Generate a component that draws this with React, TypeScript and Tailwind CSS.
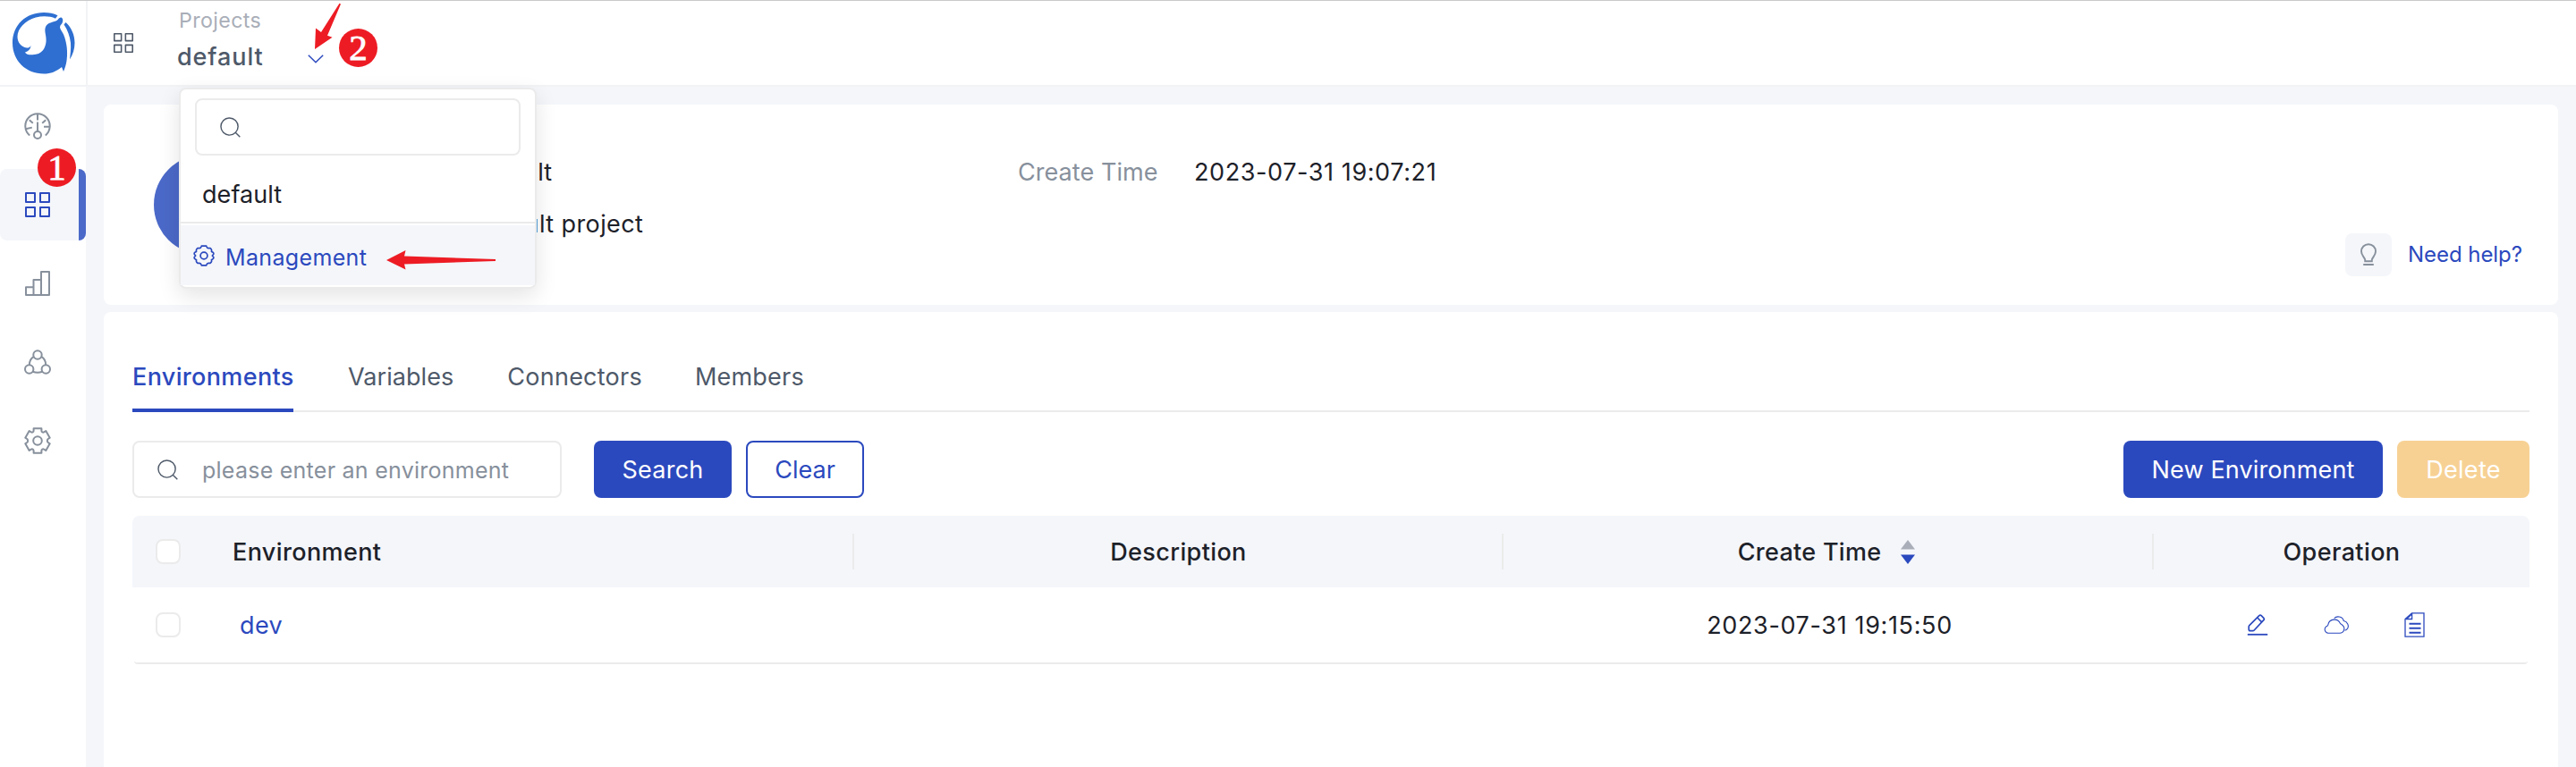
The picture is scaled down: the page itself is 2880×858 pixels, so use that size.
type IconProps = { className?: string };

const GearIcon = ({ className }: IconProps) => (
  <svg viewBox="0 0 30 30" className={className} fill="none" stroke="currentColor" strokeWidth="2" strokeLinejoin="round">
    <path d="M10.6 1.300h8.800v2.500a1.800 1.800 0 0 0 2.700 1.600l2.200-1.300 4.400 7.600-1.400.9a2.700 2.700 0 0 0 0 4.800l1.400.9-4.400 7.600-2.200-1.300a1.800 1.800 0 0 0-2.700 1.600v2.500h-8.800v-2.500a1.800 1.800 0 0 0-2.700-1.600l-2.200 1.300-4.400-7.600 1.400-.9a2.700 2.700 0 0 0 0-4.800l-1.400-.9 4.400-7.600 2.200 1.300a1.800 1.800 0 0 0 2.700-1.600z" />
    <circle cx="15" cy="15" r="4.8" />
  </svg>
);

const gearQuarter = "M12 1.200h2.600C15.200 2.900 15.800 3.800 17.200 3.700L19.100 3.600C20 4.200 20.500 4.900 20.600 5.800L20.500 7.400C21.400 8.200 22.500 8.300 22.800 9.200V10.100C22.600 11.100 21.400 11.100 21.400 12";

const SmallGearIcon = ({ className }: IconProps) => (
  <svg viewBox="0 0 24 24" className={className} fill="none" stroke="currentColor" strokeWidth="1.7">
    <path d={gearQuarter} />
    <path d={gearQuarter} transform="matrix(-1 0 0 1 24 0)" />
    <path d={gearQuarter} transform="matrix(1 0 0 -1 0 24)" />
    <path d={gearQuarter} transform="matrix(-1 0 0 -1 24 24)" />
    <circle cx="12" cy="12" r="3.9" />
  </svg>
);

const GridIcon = ({ className }: IconProps) => (
  <svg viewBox="0 0 28 28" className={className} fill="none" stroke="currentColor" strokeWidth="2" strokeLinejoin="round">
    <path d="M1 1h10v10H1zM17 1h10v10H17zM1 17h10v10H1zM17 17h10v10H17z" />
  </svg>
);

const DashboardIcon = ({ className }: IconProps) => (
  <svg viewBox="0 0 30 30" className={className} fill="none" stroke="currentColor" strokeWidth="2">
    <path d="M6.200 25.400A13.700 13.700 0 1 1 23.800 25.400" />
    <circle cx="15" cy="25" r="4" />
    <path d="M15 21V10.500M15 1.500v7M5.800 8.200l4 3.500M24.200 8.200l-4 3.500M1.800 18.200l7-1.600M22 15.800h6.500" />
  </svg>
);

const BarsIcon = ({ className }: IconProps) => (
  <svg viewBox="0 0 28 28" className={className} fill="none" stroke="currentColor" strokeWidth="2" strokeLinejoin="round">
    <path d="M1 18.300h8.500V27H1zM9.500 10h8.500v17H9.500zM18 1h9v26h-9z" />
  </svg>
);

const NodesIcon = ({ className }: IconProps) => (
  <svg viewBox="0 0 30 28" className={className} fill="none" stroke="currentColor" strokeWidth="2">
    <circle cx="15" cy="6" r="4.700" />
    <circle cx="5.700" cy="22" r="4.700" />
    <circle cx="24.300" cy="22" r="4.700" />
    <path d="M11 7.800C7.600 9.600 5.800 13 5.900 17.300M19 7.800c3.400 1.800 5.200 5.200 5.100 9.500M9.600 24.700c3.500 1.400 7.300 1.400 10.800 0" />
  </svg>
);

const SearchIcon = ({ className }: IconProps) => (
  <svg viewBox="0 0 24 24" className={className} fill="none" stroke="currentColor" strokeWidth="1.500">
    <circle cx="11" cy="11" r="10" />
    <path d="M18 18l5.300 5.300" />
  </svg>
);

const BulbIcon = ({ className }: IconProps) => (
  <svg viewBox="0 0 18 26" className={className} fill="none" stroke="currentColor" strokeWidth="1.900">
    <path d="M5.200 20.200V18.500C4.600 15.700 1 13.700 1 9.200a8 8 0 0 1 16 0c0 4.500-3.600 6.500-4.200 9.300v1.700z" />
    <path d="M4 24h10" strokeLinecap="round" strokeWidth="2.200" />
  </svg>
);

const EditIcon = ({ className }: IconProps) => (
  <svg viewBox="0 0 24 26" className={className} fill="none" stroke="currentColor" strokeWidth="1.700" strokeLinejoin="round">
    <path d="M13.800 2.700q1.200-1.200 2.400 0l2.600 2.600q1.200 1.200 0 2.400L8.200 19q-.6.700-1.500.7H3.800q-1.600 0-1.600-1.600v-3q0-.8.600-1.400zM11.800 5l4.800 4.800" />
    <path d="M.8 23.800h22.400" strokeWidth="1.800" />
  </svg>
);

const CloudIcon = ({ className }: IconProps) => (
  <svg viewBox="0 0 28 20" className={className} fill="none" stroke="currentColor" strokeWidth="1.100">
    <path d="M5 19.300h12.800a5 5 0 0 0 3-9C20 9.400 19 9 18.500 8.600A7.200 7.200 0 0 0 4.800 9.800C5 11.100 3.500 11.300 2.700 11.900A4.200 4.200 0 0 0 5 19.300z" />
    <path d="M11.700 2.600C14.300-.2 20.800.2 22.300 5.500 26.500 6.300 28.600 11.100 26.500 14.300 25.700 15.500 24.700 16 23.500 16.200" />
  </svg>
);

const DocIcon = ({ className }: IconProps) => (
  <svg viewBox="0 0 23 28" className={className} fill="none" stroke="currentColor" strokeWidth="1.300">
    <path d="M8.500.9H22v26.200H1V7.600z" />
    <path d="M8.600.9v6.600H1.300M3.200 6.800L8 2.400" />
    <path d="M5.500 12.700h13M5.500 17.700h13M5.500 22.800h13" strokeWidth="2" />
  </svg>
);

const Logo = ({ className }: IconProps) => (
  <svg viewBox="0 0 70 69" className={className} fill="#2e6fd1">
    <path d="M0 34C0 14 15 0 35 0 41 0 46 1 50.500 3.300L48 6.700C42 4 34 3.500 26 5.500 14 9 5.500 18 5.500 27c0 6.500 4 11.500 10.500 12.500 2 0 3.500-.5 4.500-2.500-.5 4.500-3 6.500-6.500 7.500 1 2.500 4.500 3 8.500 2.800C33 46.800 36.500 40.500 37.500 33 38.300 26 35 21 37 16c2.500-5 8-5 12.500-7C51.500 7.800 52 5 54.500 5.500c2 1 2 3 1.500 5-.5 2.500-3 3.500-3 6 .5 3.500 4 6 5.500 12C61.500 38.500 61.500 47 60.500 54c-.5 4-1.800 8-3.500 12L55 61C49 66 42.500 68.500 35 68.500 15 68.500 0 54 0 34z" />
    <path d="M59.500 11C66 17 69.500 25 69.500 34c0 7-2 13-5.500 18.500C64.500 47 65.500 41 65 34 64 26 61.500 19.500 57.500 13.500z" />
  </svg>
);

const Marker = ({ n, className }: { n: number; className?: string }) => (
  <div className={`absolute flex h-[43px] w-[43px] items-center justify-center rounded-full bg-[#ed1c24] font-['Liberation_Serif',serif] text-[41px] leading-[43px] text-white [-webkit-text-stroke:0.8px_white] ${className}`}>
    {n}
  </div>
);

const Checkbox = () => <span className="block h-7 w-7 rounded-lg border-2 border-[#ebebeb] bg-white" />;

const tabs = [
  { label: "Variables", style: "ml-[61px] tracking-[0.06px]" },
  { label: "Connectors", style: "ml-[60px] tracking-[0.25px]" },
  { label: "Members", style: "ml-[59px] tracking-[0.2px]" },
];

function Sidebar() {
  return (
    <aside className="flex w-24 shrink-0 flex-col bg-white text-[#87909c]">
      <div className="flex h-[88px] items-center pl-[27px]"><DashboardIcon className="h-[30px] w-[30px]" /></div>
      <div className="flex h-[88px] items-center">
        <div className="flex h-20 w-24 items-center justify-between overflow-hidden rounded-lg bg-[#f4f6fa] pl-7 text-[#2b49be]">
          <GridIcon className="h-7 w-7" />
          <span className="h-20 w-2 bg-[#4b69c8]" />
        </div>
      </div>
      <div className="flex h-[88px] items-center pl-7"><BarsIcon className="h-7 w-7" /></div>
      <div className="flex h-[88px] items-center pl-[27px]"><NodesIcon className="h-7 w-[30px]" /></div>
      <div className="flex h-[88px] items-center pl-[27px]"><GearIcon className="h-[30px] w-[30px]" /></div>
    </aside>
  );
}

function Dropdown() {
  return (
    <div className="absolute left-[200px] top-[98px] flex h-[225px] w-[400px] flex-col rounded-lg border-2 border-[#ebebeb] bg-white shadow-[0_8px_24px_rgba(0,0,0,0.11)]">
      <div className="mx-4 mt-2.5 flex h-16 shrink-0 items-center rounded-lg border-2 border-[#ebebeb] pl-[26px]">
        <SearchIcon className="h-[23px] w-[23px] text-[#4e5969]" />
      </div>
      <div className="flex h-[76px] shrink-0 items-center border-b-2 border-[#ebebeb] pl-6 pt-[13px] text-[27px] leading-[40px] tracking-[0.07px] text-[#1d2129]">default</div>
      <div className="mt-0.5 flex h-[67px] shrink-0 items-center bg-[#f4f6fa] pl-3.5 text-[#2b49be]">
        <SmallGearIcon className="h-6 w-6" />
        <span className="pl-3 pt-1 text-[25px] leading-[40px] tracking-[0.35px]">Management</span>
      </div>
    </div>
  );
}

export default function App() {
  return (
    <div className="relative flex h-[858px] w-[2880px] flex-col overflow-hidden bg-[#f4f6fa] font-['Inter',sans-serif]">
      <header className="flex h-[97px] shrink-0 border-b-2 border-t border-b-[#f2f3f5] border-t-[#c9c9c9] bg-white">
        <div className="flex w-[98px] border-r-2 border-[#f2f3f5] pl-3.5 pt-[13px]"><Logo className="h-[69px] w-[70px]" /></div>
        <GridIcon className="ml-[29px] mt-9 h-[22px] w-[22px] text-[#4e5969]" />
        <div className="ml-[51px] pt-[2px]">
          <div className="text-[23.2px] leading-[40px] tracking-[0.4px] text-[#a9aeb8]">Projects</div>
          <div className="-ml-[2px] flex items-center pt-px">
            <span className="w-[146px] text-[27px] font-medium leading-[40px] tracking-[0.9px] text-[#4e5969]">default</span>
            <svg viewBox="0 0 18 10" className="mt-[3px] h-2.5 w-[18px]" fill="none" stroke="#2b49be" strokeWidth="1.500">
              <path d="M.8.800L9 8.800l8.200-8" />
            </svg>
          </div>
        </div>
      </header>

      <div className="flex min-h-0 flex-1">
        <Sidebar />
        <main className="flex flex-1 flex-col gap-2 px-5 pt-5">
          <section className="flex h-[224px] shrink-0 rounded-lg bg-white text-[27px] leading-[40px] text-[#1d2129]">
            <div className="ml-14 mt-14 h-28 w-28 shrink-0 rounded-full bg-[#4b69c8]" />
            <div className="ml-[244px] w-[610px] pt-14">
              <div className="tracking-[0.07px]">default</div>
              <div className="mt-[18px] tracking-[0.4px]">default project</div>
            </div>
            <div className="flex pt-14">
              <span className="w-[197px] tracking-[0.06px] text-[#87909c]">Create Time</span>
              <span className="tracking-[0.6px]">2023-07-31 19:07:21</span>
            </div>
            <div className="ml-auto mr-10 mt-36 flex h-12 items-center text-[#2b49be]">
              <span className="flex h-12 w-[52px] items-center justify-center rounded-lg bg-[#f4f6fa] text-[#87909c]">
                <BulbIcon className="h-[26px] w-[18px]" />
              </span>
              <span className="pl-[18px] text-[24px] tracking-[-0.05px]">Need help?</span>
            </div>
          </section>

          <section className="flex flex-1 flex-col rounded-t-lg bg-white px-8 pt-[52px] text-[27px] leading-[40px]">
            <nav className="flex h-[60px] shrink-0 text-[#4e5969] shadow-[inset_0_-2px_0_#ebebeb]">
              <div className="w-[180px] border-b-4 border-[#2b49be] pt-px font-medium tracking-[0.35px] text-[#2b49be]">Environments</div>
              {tabs.map((t) => (
                <div key={t.label} className={`pt-px ${t.style}`}>{t.label}</div>
              ))}
            </nav>

            <div className="mt-8 flex h-16 shrink-0 items-center">
              <div className="flex h-16 w-[480px] items-center rounded-lg border-2 border-[#ebebeb] pl-[26px] text-[#87909c]">
                <SearchIcon className="h-[23px] w-[23px] text-[#4e5969]" />
                <span className="pl-[27px] pt-[2px] text-[25px] tracking-[0.25px]">please enter an environment</span>
              </div>
              <button className="ml-9 h-16 w-[154px] rounded-lg bg-[#2b49be] pt-[2px] tracking-[0.27px] text-white">Search</button>
              <button className="ml-4 h-16 w-[132px] rounded-lg border-2 border-[#2b49be] pt-[2px] tracking-[0.02px] text-[#2b49be]">Clear</button>
              <button className="ml-auto h-16 w-[290px] rounded-lg bg-[#2b49be] pt-[2px] tracking-[0.14px] text-white">New Environment</button>
              <button className="ml-4 h-16 w-[148px] rounded-lg bg-[#f7d194] pt-[2px] tracking-[0.3px] text-white">Delete</button>
            </div>

            <div className="mt-5 grid h-20 shrink-0 grid-cols-[78px_729px_726px_727px_420px] items-center rounded-t-lg bg-[#f4f6fa] font-medium text-[#1d2129]">
              <div className="pl-[26px]"><Checkbox /></div>
              <div className="h-10 border-r-2 border-[#ebebeb] pl-[34px] pt-px tracking-[0.38px]">Environment</div>
              <div className="h-10 border-r-2 border-[#ebebeb] pl-px pt-px text-center tracking-[0.38px]">Description</div>
              <div className="flex h-10 items-center justify-center gap-[22px] border-r-2 border-[#ebebeb] pr-[3px]">
                <span className="pt-[2px] tracking-[0.3px]">Create Time</span>
                <svg viewBox="0 0 16 27" className="h-[27px] w-4">
                  <path d="M8 0l8 10.500H0z" fill="#a9aeb8" />
                  <path d="M8 27l8-10.500H0z" fill="#2b49be" />
                </svg>
              </div>
              <div className="h-10 pt-px text-center tracking-[0.4px]">Operation</div>
            </div>

            <div className="mx-0.5 grid h-[86px] shrink-0 grid-cols-[76px_729px_726px_727px_418px] items-center rounded-b border-b-2 border-[#ebebeb] text-[#1d2129]">
              <div className="pl-6"><Checkbox /></div>
              <div className="pl-[42px] pt-px tracking-[0.38px] text-[#2b49be]">dev</div>
              <div />
              <div className="pl-[2px] pt-px text-center tracking-[0.65px]">2023-07-31 19:15:50</div>
              <div className="flex items-center pl-[104px] text-[#2b49be]">
                <EditIcon className="h-[26px] w-6" />
                <CloudIcon className="ml-[62px] h-5 w-7" />
                <DocIcon className="ml-[62px] h-7 w-[23px]" />
              </div>
            </div>
          </section>
        </main>
      </div>

      <Dropdown />
      <Marker n={1} className="left-[42px] top-[166px]" />
      <Marker n={2} className="left-[379px] top-[32px]" />
      <svg viewBox="0 0 32 54" className="absolute left-[350px] top-[2px] h-[54px] w-8" fill="#ed1c24">
        <path d="M2 53L3 29.500l6 4.500L29.500 1.800l1.500.7L16 37.800l5.500 2z" />
      </svg>
      <svg viewBox="0 0 124 22" className="absolute left-[432px] top-[280px] h-[22px] w-[124px]" fill="#ed1c24">
        <path d="M0 11L21.500 0l-1.500 6.500 102 3.500v2L20 15.500l1.500 6z" />
      </svg>
    </div>
  );
}
